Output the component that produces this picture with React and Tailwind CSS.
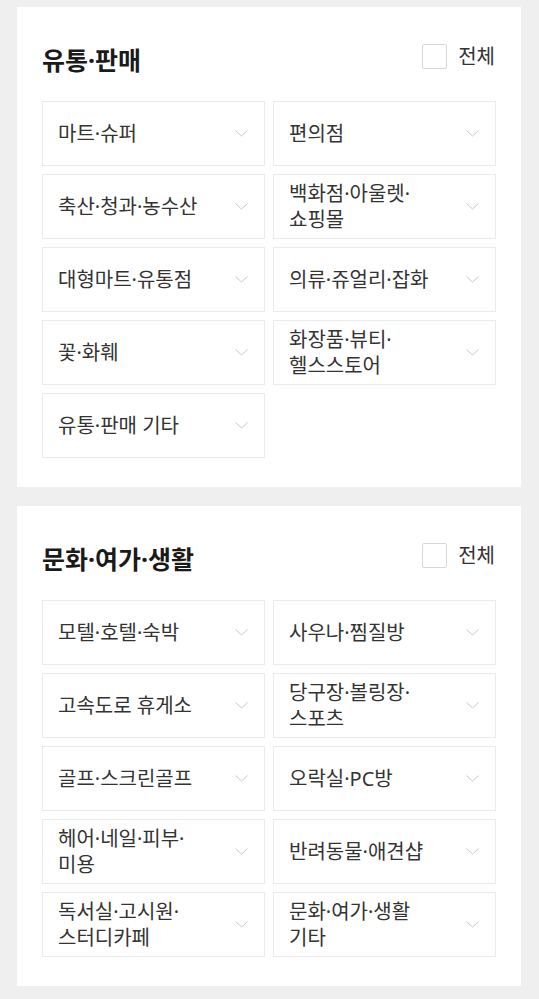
import React from "react";

const sections = [
  {
    title: "유통·판매",
    items: [
      ["마트·슈퍼"],
      ["편의점"],
      ["축산·청과·농수산"],
      ["백화점·아울렛·", "쇼핑몰"],
      ["대형마트·유통점"],
      ["의류·쥬얼리·잡화"],
      ["꽃·화훼"],
      ["화장품·뷰티·", "헬스스토어"],
      ["유통·판매 기타"],
    ],
  },
  {
    title: "문화·여가·생활",
    items: [
      ["모텔·호텔·숙박"],
      ["사우나·찜질방"],
      ["고속도로 휴게소"],
      ["당구장·볼링장·", "스포츠"],
      ["골프·스크린골프"],
      ["오락실·PC방"],
      ["헤어·네일·피부·", "미용"],
      ["반려동물·애견샵"],
      ["독서실·고시원·", "스터디카페"],
      ["문화·여가·생활", "기타"],
    ],
  },
];

function Chevron() {
  return (
    <svg width="13" height="7" viewBox="0 0 13 7" fill="none" className="shrink-0">
      <path d="M0.5 0.5L6.5 6L12.5 0.5" stroke="#c8c8c8" strokeWidth="1" />
    </svg>
  );
}

function CategoryItem({ lines }) {
  return (
    <button className="flex h-[65px] items-center justify-between border border-[#ebebeb] bg-white pl-[15px] pr-[16px] text-left">
      <span className="text-[20px] leading-[26px] text-[#333]">
        {lines.map((line, i) => (
          <span key={i} className="block whitespace-nowrap">
            {line}
          </span>
        ))}
      </span>
      <Chevron />
    </button>
  );
}

function Section({ title, items, className }) {
  return (
    <section className={`bg-white px-[25px] pt-[37px] pb-[29px] ${className}`}>
      <div className="flex items-start justify-between">
        <h2 className="text-[25px] font-bold leading-[32px] text-[#1a1a1a]">{title}</h2>
        <label className="mr-[1px] flex items-center gap-[11px]">
          <span className="h-[25px] w-[25px] rounded-[2px] border border-[#d8d8d8] bg-white" />
          <span className="text-[20px] leading-[25px] text-[#333]">전체</span>
        </label>
      </div>
      <div className="mt-[25px] grid grid-cols-2 gap-[8px]">
        {items.map((lines, i) => (
          <CategoryItem key={i} lines={lines} />
        ))}
      </div>
    </section>
  );
}

export default function App() {
  return (
    <div className="min-h-screen bg-[#efefef] pt-[7px] pb-[13px] pl-[17px] pr-[18px] font-['Noto_Sans','Noto_Sans_CJK_KR',sans-serif]">
      {sections.map((s, i) => (
        <Section key={s.title} title={s.title} items={s.items} className={i > 0 ? "mt-[19px]" : ""} />
      ))}
    </div>
  );
}
